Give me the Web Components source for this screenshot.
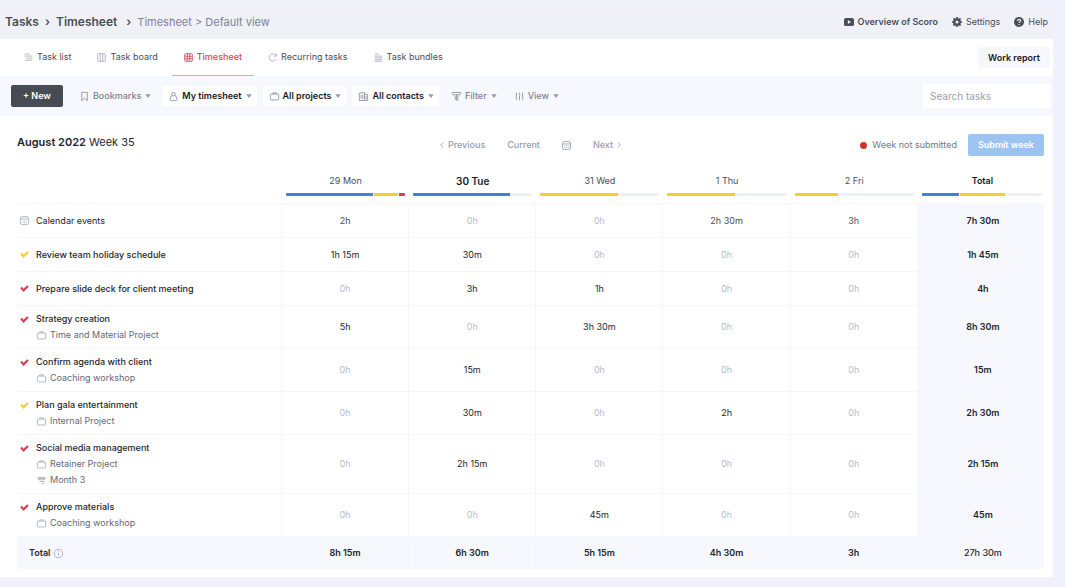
<!DOCTYPE html>
<html lang="en">
<head>
<meta charset="utf-8">
<meta name="viewport" content="width=device-width, initial-scale=1">
<title>Timesheet</title>
<style>
    :root {
        --page: #eff2fb;
        --soft: #f7f8fd;
        --line: #f5f6fa;
        --text: #23262e;
        --mid: #4a4e59;
        --muted: #7c8296;
        --faint: #b6bbca;
        --blue: #3a82df;
        --yellow: #f3cf35;
        --red: #dc3f55;
    }

    body {
        margin: 0;
        background: var(--page);
        color: var(--text);
        font: 9px/16px Inter, "Liberation Sans", sans-serif;
    }
</style>
</head>
<body>
<scoro-app></scoro-app>

<script>
const ICONS = {
    list: '<path d="M1 1.5h7M1 4.5h11M3 7.5h9M1 10.5h11"/>',
    board: '<rect x="1" y="1" width="11" height="11" rx="1"/><path d="M4.7 1v11M8.3 1v11"/>',
    grid: '<rect x="1" y="1" width="11" height="11" rx="1"/><path d="M4.7 1v11M8.3 1v11M1 4.7h11M1 8.3h11"/>',
    repeat: '<path d="M11.5 8.5A5.2 5.2 0 1 1 9.8 2.3L12 4.2M12 .8v3.6H8.4"/>',
    bundle: '<path d="M1 1.5h6M1 4.5h11M1 7h11M1 9.5h11M1 12h11"/>',
    bookmark: '<path d="M2.5 .5h8v12L6.5 9l-4 3.5z"/>',
    person: '<circle cx="6.5" cy="3" r="2.5"/><path d="M4.5 5C2.6 6 1.5 8 1.5 10.8q0 1.6 1.6 1.6h6.8q1.6 0 1.6-1.6c0-2.8-1.1-4.8-3-5.8"/>',
    project: '<rect x=".5" y="3" width="12" height="8.5" rx="1.2"/><path d="M4 3V1.2h5V3"/>',
    contacts: '<path d="M.5 1.8 8 .8v11.5H.5zM8 3.5h4.5v8.8H8M3 4v6M5.5 4v6M10.2 5.5v5"/>',
    filter: '<path d="M.5 .8h12v1.8L8.2 7.2v5.2l-3.4-1.8V7.2L.5 2.6zM3.5 3.8h6M6.5 4v6"/>',
    sliders: '<path d="M2 1v6M2 9.5V12M6.5 1v2M6.5 5.5V12M11 1v6M11 9.5V12M.8 8.2h2.4M5.3 4.2h2.4M9.8 8.2h2.4"/>',
    calendar: '<rect x=".6" y=".8" width="11.8" height="11.6" rx="2.6"/><path d="M1 4.2h11M3.5 7h1.2M6 7h1.2M8.5 7h1.2M3.5 9.5h1.2M6 9.5h1.2M8.5 9.5h1.2"/>',
    retainer: '<path d="M1.5 2h10q1 2.2-1 3.5H2.8Q.8 4.5 1.5 2zM2 3.7h9M4 8h7.5M7 11h3.5"/>',
    left: '<path d="M9 1 3.5 6.5 9 12" stroke-width="1.8"/>',
    right: '<path d="m4 1 5.5 5.5L4 12" stroke-width="1.8"/>',
    caret: '<path d="M.5 2.5h12L6.5 11z" fill="currentColor" stroke="none"/>',
    info: '<circle cx="6.5" cy="6.5" r="5.9"/><path d="M6.5 5.8v4M6.5 3.2v1.2"/>',
    check: '<path d="M1.5 5 5.2 9.2 11.5 2.8" stroke-width="3.2"/>',
    video: '<rect x="0" y="1.2" width="13" height="10.6" rx="2.5" fill="currentColor" stroke="none"/><path d="M5 4v5l4.2-2.5z" fill="#f0f1f6" stroke="none"/>',
    gear: '<circle cx="6.5" cy="6.5" r="3.5" stroke-width="3"/><path d="M6.5 0v13M0 6.5h13M1.9 1.9l9.2 9.2M11.1 1.9 1.9 11.1" stroke-width="2.2"/><circle cx="6.5" cy="6.5" r="2" fill="#f0f1f6" stroke="none"/>',
    help: '<circle cx="6.5" cy="6.5" r="6.5" fill="currentColor" stroke="none"/><path d="M4.6 5.2c0-2.8 4-2.6 4-.3 0 1.4-2 1.5-2 3M6.6 9.2v1.5" stroke="#f0f1f6" stroke-width="1.5"/>'
};

class UiIcon extends HTMLElement {
    constructor() {
        super();
        this.shadow = this.attachShadow({mode: "open"});
    }

    connectedCallback() {
        this.shadow.innerHTML = `
        <style>
            :host { display: inline-flex; flex: none; width: 9px; height: 9px; }
            svg { width: 100%; height: 100%; fill: none; stroke: currentColor; stroke-width: 1.2; overflow: visible; }
        </style>
        <svg viewBox="0 0 13 13" aria-hidden="true">${ICONS[this.getAttribute("name")]}</svg>
        `;
    }
}

class AppHeader extends HTMLElement {
    constructor() {
        super();
        this.shadow = this.attachShadow({mode: "open"});
    }

    connectedCallback() {
        this.shadow.innerHTML = `
        <style>
            :host { display: flex; justify-content: space-between; align-items: center; height: 30px; padding: 0 5px; margin-top: 9px; background: #f0f1f6; color: var(--mid); box-sizing: border-box; }
            nav { display: flex; align-items: center; font-size: 12px; padding-bottom: 5px; }
            .crumbs { gap: 6px; font-weight: 600; }
            .crumbs .here { font-size: 11px; font-weight: 400; color: var(--muted); }
            .crumbs .wide { margin-left: 3px; }
            .links { font-size: 9px; gap: 14px; }
            .links ui-icon { width: 10px; height: 10px; }
            a { display: flex; align-items: center; gap: 4px; color: inherit; text-decoration: none; }
            .bold { font-weight: 600; }
        </style>
        <nav class="crumbs" aria-label="Breadcrumb">
            <a href="#tasks">Tasks</a><span>›</span>
            <a href="#timesheet">Timesheet</a><span class="wide">›</span>
            <span class="here">Timesheet &gt; Default view</span>
        </nav>
        <nav class="links" aria-label="Help">
            <a class="bold" href="#overview"><ui-icon name="video"></ui-icon>Overview of Scoro</a>
            <a href="#settings"><ui-icon name="gear"></ui-icon>Settings</a>
            <a href="#help"><ui-icon name="help"></ui-icon>Help</a>
        </nav>
        `;
    }
}

class TabLink extends HTMLElement {
    constructor() {
        super();
        this.shadow = this.attachShadow({mode: "open"});
    }

    connectedCallback() {
        this.shadow.innerHTML = `
        <style>
            :host { display: flex; color: var(--mid); }
            a { display: flex; align-items: center; gap: 4px; padding: 0 12px; color: inherit; text-decoration: none; border-bottom: 1px solid transparent; white-space: nowrap; }
            ui-icon { color: #a5abba; }
            :host([active]) a { color: var(--red); border-color: #eb9fac; font-weight: 500; }
            :host([active]) ui-icon { color: inherit; }
        </style>
        <a href="#${this.getAttribute("icon")}"><ui-icon name="${this.getAttribute("icon")}"></ui-icon><slot></slot></a>
        `;
    }
}

class DropButton extends HTMLElement {
    constructor() {
        super();
        this.shadow = this.attachShadow({mode: "open"});
    }

    connectedCallback() {
        this.shadow.innerHTML = `
        <style>
            :host { display: block; }
            button { display: flex; align-items: center; gap: 4px; height: 20px; padding: 0 5px 0 7px; border: 0; border-radius: 2px; background: none; color: var(--muted); font: inherit; font-weight: 500; white-space: nowrap; }
            ui-icon { color: #858b9c; }
            .caret { width: 6px; height: 6px; color: #969cac; }
            :host([filled]) button { background: #fff; color: #17191f; font-weight: 600; }
        </style>
        <button type="button" aria-haspopup="true">
            <ui-icon name="${this.getAttribute("icon")}"></ui-icon><slot></slot><ui-icon class="caret" name="caret"></ui-icon>
        </button>
        `;
    }
}

class TabBar extends HTMLElement {
    constructor() {
        super();
        this.shadow = this.attachShadow({mode: "open"});
    }

    connectedCallback() {
        this.shadow.innerHTML = `
        <style>
            :host { display: flex; justify-content: space-between; align-items: center; height: 37px; padding: 0 3px 0 12px; background: #fff; box-sizing: border-box; }
            nav { display: flex; align-self: stretch; gap: 2px; font-size: 9px; }
            button { height: 21px; padding: 0 10px; border: 0; border-radius: 2px; background: var(--soft); color: #17191f; font: inherit; font-weight: 600; }
        </style>
        <nav aria-label="Views">
            <tab-link icon="list">Task list</tab-link>
            <tab-link icon="board">Task board</tab-link>
            <tab-link icon="grid" active>Timesheet</tab-link>
            <tab-link icon="repeat">Recurring tasks</tab-link>
            <tab-link icon="bundle">Task bundles</tab-link>
        </nav>
        <button type="button">Work report</button>
        `;
    }
}

class ToolBar extends HTMLElement {
    constructor() {
        super();
        this.shadow = this.attachShadow({mode: "open"});
    }

    connectedCallback() {
        this.shadow.innerHTML = `
        <style>
            :host { display: flex; align-items: center; gap: 6px; height: 40px; padding: 0 3px 0 11px; background: var(--soft); box-sizing: border-box; }
            .new { height: 22px; padding: 0 12px; margin-right: 4px; border: 0; border-radius: 2px; background: #474b54; color: #fff; font: inherit; font-weight: 600; white-space: nowrap; }
            input { width: 127px; height: 24px; margin-left: auto; padding: 0 7px; border: 0; border-radius: 2px; background: #fff; color: var(--text); font: inherit; font-size: 10px; box-sizing: border-box; }
            input::placeholder { color: #999fb0; opacity: 1; }
        </style>
        <button class="new" type="button">+ New</button>
        <drop-button icon="bookmark">Bookmarks</drop-button>
        <drop-button icon="person" filled>My timesheet</drop-button>
        <drop-button icon="project" filled>All projects</drop-button>
        <drop-button icon="contacts" filled>All contacts</drop-button>
        <drop-button icon="filter">Filter</drop-button>
        <drop-button icon="sliders">View</drop-button>
        <input type="search" placeholder="Search tasks" aria-label="Search tasks">
        `;
    }
}

class WeekBar extends HTMLElement {
    constructor() {
        super();
        this.shadow = this.attachShadow({mode: "open"});
    }

    connectedCallback() {
        this.shadow.innerHTML = `
        <style>
            :host { display: grid; grid-template-columns: 1fr auto 1fr; align-items: center; height: 22px; }
            h1 { margin: 0; align-self: start; font-size: 11px; line-height: 16px; font-weight: 400; }
            b { font-weight: 600; }
            nav, .state { display: flex; align-items: center; }
            nav { gap: 22px; }
            nav button { display: flex; align-items: center; gap: 3px; padding: 0; border: 0; background: none; color: #969cad; font: inherit; font-weight: 500; }
            .arrow { width: 6px; height: 6px; }
            .state { justify-content: flex-end; gap: 11px; color: #737887; }
            .state span { display: flex; align-items: center; gap: 5px; }
            .state i { width: 7px; height: 7px; border-radius: 50%; background: #d0312a; }
            .submit { height: 22px; padding: 0 10px; border: 0; border-radius: 2px; background: #9dc3f0; color: #fff; font: inherit; font-weight: 600; }
        </style>
        <h1><b>August 2022</b> Week 35</h1>
        <nav aria-label="Week">
            <button type="button"><ui-icon class="arrow" name="left"></ui-icon>Previous</button>
            <button type="button">Current</button>
            <button type="button" aria-label="Pick a date"><ui-icon name="calendar"></ui-icon></button>
            <button type="button">Next<ui-icon class="arrow" name="right"></ui-icon></button>
        </nav>
        <div class="state">
            <span><i></i>Week not submitted</span>
            <button class="submit" type="button">Submit week</button>
        </div>
        `;
    }
}

class LoadBar extends HTMLElement {
    constructor() {
        super();
        this.shadow = this.attachShadow({mode: "open"});
    }

    connectedCallback() {
        const parts = this.getAttribute("parts").split(" ").map(part => {
            const [color, share] = part.split(":");
            return `<i style="width:${share}%;background:var(--${color})"></i>`;
        });
        this.shadow.innerHTML = `
        <style>
            :host { display: flex; gap: 1px; height: 3px; border-radius: 1px; background: #f0f1f7; overflow: hidden; }
        </style>
        ${parts.join("")}
        `;
    }
}

const DAYS = [
    ["29 Mon", "blue:73 yellow:20 red:5"],
    ["30 Tue", "blue:81"],
    ["31 Wed", "yellow:65"],
    ["1 Thu", "yellow:57"],
    ["2 Fri", "yellow:36"],
    ["Total", "blue:31 yellow:37"]
];

const ROWS = [
    {name: "Calendar events", hours: ["2h", "0h", "0h", "2h 30m", "3h", "7h 30m"]},
    {name: "Review team holiday schedule", color: "yellow", hours: ["1h 15m", "30m", "0h", "0h", "0h", "1h 45m"]},
    {name: "Prepare slide deck for client meeting", color: "red", hours: ["0h", "3h", "1h", "0h", "0h", "4h"]},
    {name: "Strategy creation", color: "red", project: "Time and Material Project", hours: ["5h", "0h", "3h 30m", "0h", "0h", "8h 30m"]},
    {name: "Confirm agenda with client", color: "red", project: "Coaching workshop", hours: ["0h", "15m", "0h", "0h", "0h", "15m"]},
    {name: "Plan gala entertainment", color: "yellow", project: "Internal Project", hours: ["0h", "30m", "0h", "2h", "0h", "2h 30m"]},
    {name: "Social media management", color: "red", project: "Retainer Project", period: "Month 3", hours: ["0h", "2h 15m", "0h", "0h", "0h", "2h 15m"]},
    {name: "Approve materials", color: "red", project: "Coaching workshop", hours: ["0h", "0h", "45m", "0h", "0h", "45m"]}
];

const TOTALS = ["8h 15m", "6h 30m", "5h 15m", "4h 30m", "3h", "27h 30m"];

class TimeTable extends HTMLElement {
    constructor() {
        super();
        this.shadow = this.attachShadow({mode: "open"});
    }

    connectedCallback() {
        this.render();
    }

    renderRow(row) {
        const icon = row.color
            ? `<ui-icon name="check" style="color:var(--${row.color})"></ui-icon>`
            : `<ui-icon name="calendar"></ui-icon>`;
        const project = row.project ? `<div class="sub"><ui-icon name="project"></ui-icon>${row.project}</div>` : "";
        const period = row.period ? `<div class="sub"><ui-icon name="retainer"></ui-icon>${row.period}</div>` : "";
        const cells = row.hours.map(h => `<td${h === "0h" ? ' class="zero"' : ""}>${h}</td>`).join("");
        return `
            <tr class="${row.color ? "task" : "event"}">
                <th scope="row"><div class="name">${icon}${row.name}</div>${project}${period}</th>
                ${cells}
            </tr>`;
    }

    render() {
        this.shadow.innerHTML = `
        <style>
            :host { display: block; }
            table { width: 100%; border-collapse: separate; border-spacing: 0; table-layout: fixed; }
            th, td { padding: 5px 0; box-sizing: border-box; text-align: center; font-weight: 400; }
            thead th { height: 48px; padding: 0 3px 7px 5px; vertical-align: bottom; color: var(--mid); border-bottom: 1px solid var(--line); }
            thead th:first-child { width: 264px; }
            thead load-bar { margin-top: 4px; }
            thead th:nth-child(3), thead th:last-child { font-weight: 600; color: #17191f; }
            thead th:nth-child(3) { font-size: 10px; }
            thead th:last-child { padding-right: 1px; }
            tbody th, tbody td { height: 34px; border-bottom: 1px solid var(--line); }
            tbody th, tfoot th { text-align: left; }
            tbody td, tfoot td { border-left: 1px solid var(--line); }
            tbody td:last-child, tfoot td:last-child { padding-left: 4px; }
            .event td { color: var(--mid); }
            tbody td:last-child { background: var(--soft); font-weight: 600; color: var(--text); }
            tbody .zero { color: var(--faint); }
            .name, .sub, .sum { display: flex; align-items: center; }
            .name { gap: 7px; padding-left: 3px; }
            .task .name { font-weight: 500; }
            .event ui-icon, .sub ui-icon, .sum ui-icon { color: #a5abba; }
            .sub { gap: 4px; padding-left: 20px; color: #636876; }
            tfoot th, tfoot td { height: 32px; background: var(--soft); font-weight: 600; }
            tfoot td:last-child { font-weight: 500; }
            .sum { gap: 4px; padding-left: 12px; }
        </style>
        <table>
            <thead>
                <tr><th></th>${DAYS.map(([day, parts]) => `<th scope="col">${day}<load-bar parts="${parts}"></load-bar></th>`).join("")}</tr>
            </thead>
            <tbody>${ROWS.map(row => this.renderRow(row)).join("")}</tbody>
            <tfoot>
                <tr><th scope="row"><div class="sum">Total<ui-icon name="info"></ui-icon></div></th>${TOTALS.map(t => `<td>${t}</td>`).join("")}</tr>
            </tfoot>
        </table>
        `;
    }
}

class ScoroApp extends HTMLElement {
    constructor() {
        super();
        this.shadow = this.attachShadow({mode: "open"});
    }

    connectedCallback() {
        this.shadow.innerHTML = `
        <style>
            :host { display: flow-root; margin: 0 12px 10px 0; }
            main { padding: 18px 9px 8px 17px; background: #fff; }
        </style>
        <app-header></app-header>
        <tab-bar></tab-bar>
        <tool-bar></tool-bar>
        <main>
            <week-bar></week-bar>
            <time-table></time-table>
        </main>
        `;
    }
}

customElements.define("ui-icon", UiIcon);
customElements.define("load-bar", LoadBar);
customElements.define("tab-link", TabLink);
customElements.define("drop-button", DropButton);
customElements.define("app-header", AppHeader);
customElements.define("tab-bar", TabBar);
customElements.define("tool-bar", ToolBar);
customElements.define("week-bar", WeekBar);
customElements.define("time-table", TimeTable);
customElements.define("scoro-app", ScoroApp);
</script>
</body>
</html>
